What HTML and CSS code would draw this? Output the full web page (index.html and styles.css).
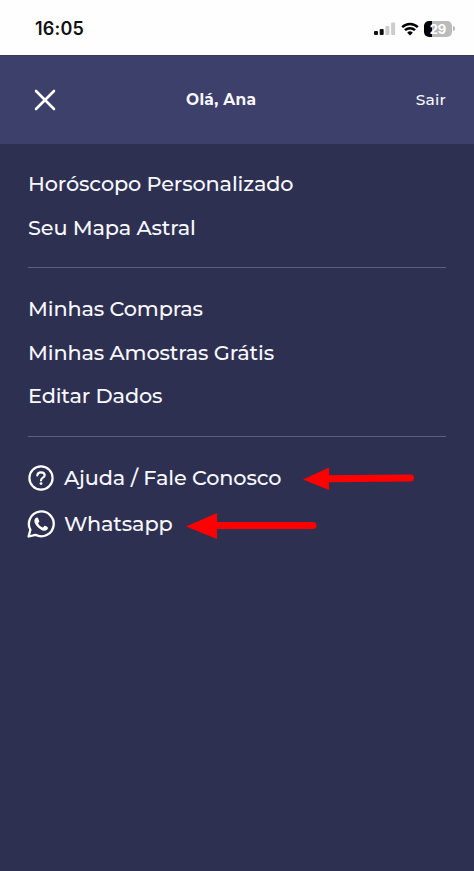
FILE: index.html
```html
<!DOCTYPE html>
<html lang="pt-BR">
<head>
    <meta charset="UTF-8">
    <meta name="viewport" content="width=device-width, initial-scale=1.0">
    <title>Menu</title>
    <link rel="stylesheet" href="styles.css">
</head>
<body>
    <div class="status-bar">
        <span class="time">16:05</span>
        <div class="status-icons">
            <svg class="signal" width="22" height="14" viewBox="0 0 22 14">
                <rect x="0" y="9" width="4" height="4" rx="1" fill="#111"/>
                <rect x="5.7" y="7" width="4" height="6" rx="1" fill="#111"/>
                <rect x="11.4" y="4" width="4" height="9" rx="1" fill="#ccc"/>
                <rect x="17.1" y="0.5" width="4" height="12.5" rx="1" fill="#ccc"/>
            </svg>
            <svg class="wifi" width="18" height="14" viewBox="0 0 18 14">
                <path d="M1.2 5.2a11.2 11.2 0 0 1 15.6 0M4 8.2a7.2 7.2 0 0 1 10 0" fill="none" stroke="#000" stroke-width="2.5"/>
                <path d="M9 13.5L6.2 10.7a4 4 0 0 1 5.6 0z" fill="#000"/>
            </svg>
            <div class="battery"><span>29</span></div>
            <i class="battery-tip"></i>
        </div>
    </div>

    <header class="header">
        <svg class="close" width="22" height="22" viewBox="0 0 22 22">
            <path d="M2 2L20 20M20 2L2 20" stroke="#fff" stroke-width="2.6" stroke-linecap="round"/>
        </svg>
        <strong class="user">Olá, Ana</strong>
        <a class="logout">Sair</a>
    </header>

    <nav class="menu">
        <div class="group">
            <a class="item">Horóscopo Personalizado</a>
            <a class="item">Seu Mapa Astral</a>
        </div>
        <div class="group">
            <a class="item">Minhas Compras</a>
            <a class="item">Minhas Amostras Grátis</a>
            <a class="item">Editar Dados</a>
        </div>
        <div class="group contact">
            <a class="item help">
                <svg class="icon" width="28" height="28" viewBox="0 0 28 28" fill="none" stroke="#fff">
                    <circle cx="14" cy="14" r="11.6" stroke-width="2.2"/>
                    <path d="M10.3 11.5C10.5 9.5 12 8.4 14 8.4C16.2 8.4 17.7 9.5 17.7 11.3C17.7 13.9 14 13.6 14 16.4" stroke-width="2.1" stroke-linecap="round"/>
                    <circle cx="14" cy="19.6" r="1.4" fill="#fff" stroke="none"/>
                </svg>
                <span class="label">Ajuda / Fale Conosco</span>
                <svg class="arrow" width="112" height="24" viewBox="0 0 112 24">
                    <path d="M24 12.7L107.5 12" stroke="#f00" stroke-width="7" stroke-linecap="round"/>
                    <path d="M0 13.5L26 1.5V24z" fill="#f00"/>
                </svg>
            </a>
            <a class="item whats">
                <svg class="icon" width="28" height="28" viewBox="0 0 28 28">
                    <path d="M1.6 26.5L3.4 19.8A12.4 12.4 0 1 1 8.4 24.8z" fill="none" stroke="#fff" stroke-width="2.3" stroke-linejoin="round"/>
                    <path d="M10.2 7.6C9.6 7.4 8.9 7.7 8.4 8.3C6.4 10.6 7.7 13.4 9.7 15.9C11.8 18.6 14.8 20.6 17.4 20.7C19.5 20.7 21.1 19.2 21 17.7C21 17.1 18.5 15.9 17.7 15.7C17.1 15.6 16.4 17.7 15.7 17.5C13.7 16.9 12.1 15.3 11.1 13.5C10.9 12.9 12.3 12.1 12.3 11.4C12.2 10.7 11.2 8.1 10.8 7.7z" fill="#fff"/>
                </svg>
                <span class="label">Whatsapp</span>
                <svg class="arrow" width="132" height="30" viewBox="0 0 132 30">
                    <path d="M28 16.5H127" stroke="#f00" stroke-width="7" stroke-linecap="round"/>
                    <path d="M0 17.5L31 4V30z" fill="#f00"/>
                </svg>
            </a>
        </div>
    </nav>
</body>
</html>
```

FILE: styles.css
```css
* { box-sizing: border-box; }
body { margin: 0; min-height: 871px; background: #2e3051; color: #f8f8ff; font-family: Montserrat, Inter, sans-serif; }

/* barra do telefone */
.status-bar { height: 55px; padding: 2px 19px 0 35px; display: flex; align-items: center; justify-content: space-between; background: #fefefe; color: #111; }
.time { font: 600 18px Inter, sans-serif; letter-spacing: 0.2px; }
.status-icons { display: flex; align-items: center; }
.wifi { margin: 0 5px 0 5px; }
.battery { width: 28px; height: 16px; border-radius: 5px; background: linear-gradient(90deg, #000 30%, #bbb 30%); color: #fff; font: 700 13px/16px Inter, sans-serif; text-align: center; }
.battery-tip { width: 2px; height: 5px; margin-left: 1px; border-radius: 0 2px 2px 0; background: #bbb; }

.header { height: 89px; padding: 0 28px 1px 34px; display: flex; align-items: center; background: #3d406b; border-top: 1px solid #35395d; }
.user { margin-left: 130px; font-size: 15.5px; font-weight: 700; letter-spacing: 0.3px; }
.logout { margin-left: auto; font-size: 15.5px; font-weight: 500; letter-spacing: 0.2px; }

.menu { padding: 0 28px; }
.group { padding: 18px 0 18px; border-bottom: 1px solid #5d5f80; }
.group + .group { padding-top: 19px; }
.group:last-child { border-bottom: 0; }
.item { height: 43.5px; display: flex; align-items: center; font-size: 20.8px; font-weight: 500; letter-spacing: -0.13px; white-space: nowrap; }
.contact .item { height: 46px; }
.contact { margin-top: -1px; }
.icon { flex: none; margin: 0 9px 0 -1px; }
.arrow { flex: none; }
.help .arrow { margin-left: 22px; }
.whats .arrow { margin-left: 13px; }
```
